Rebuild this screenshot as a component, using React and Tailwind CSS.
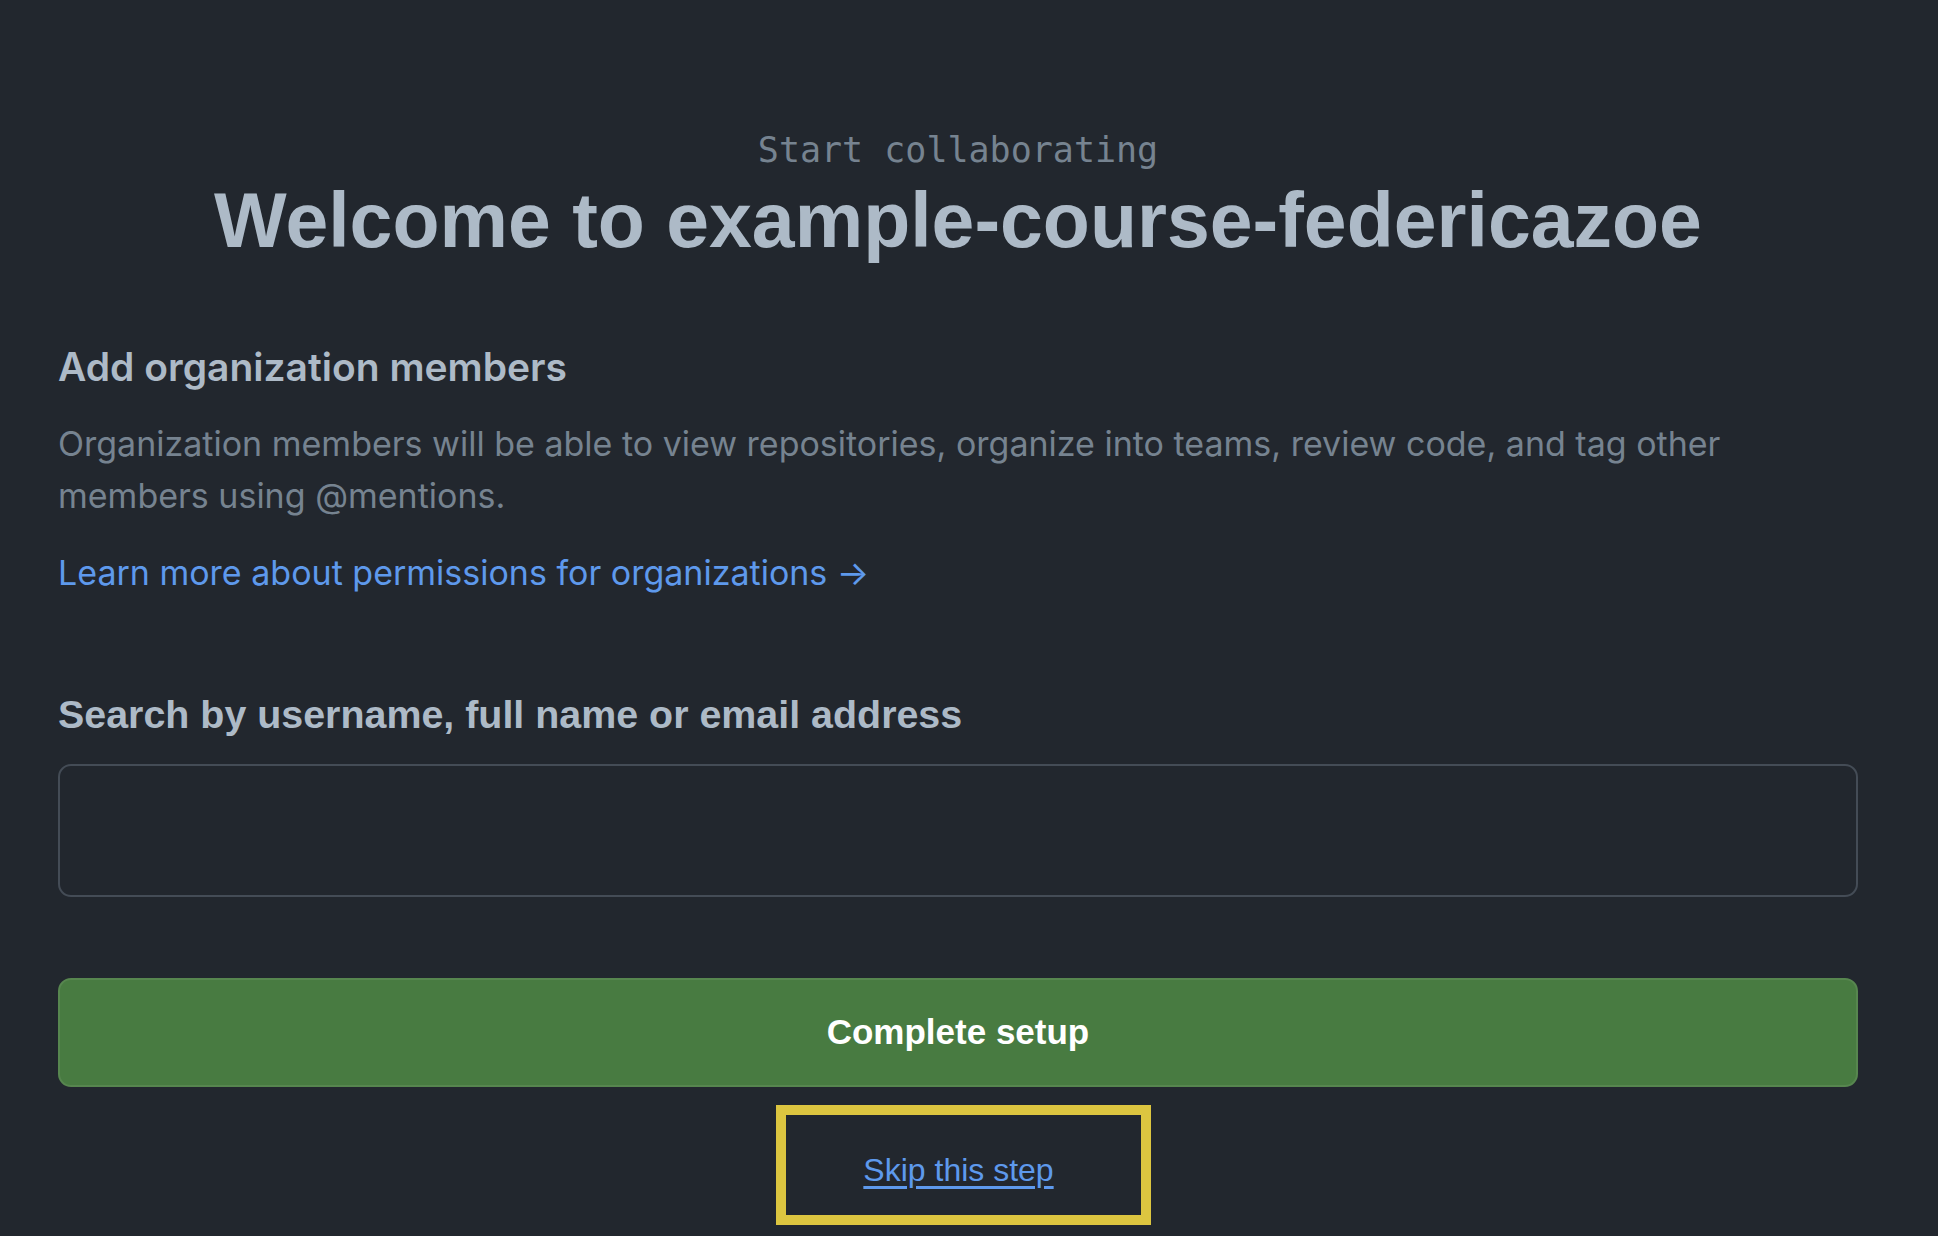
export default function App() {
  return (
    <div className="min-h-screen bg-[#22272e]">
      <div className="ml-[58px] w-[1800px] pt-[129px] pb-[11px]">
        <div className="text-center">
          <div className="font-['DejaVu_Sans_Mono',monospace] text-[35px] leading-[42px] text-[#768390]">
            Start collaborating
          </div>
          <h1 className="mt-[3px] font-['Liberation_Sans',Arial,sans-serif] text-[77px] font-bold leading-[92px] text-[#adbac7]">
            Welcome to example-course-federicazoe
          </h1>
        </div>

        <h2 className="mt-[77px] font-['Inter',sans-serif] text-[39px] font-semibold leading-[48px] text-[#adbac7]">
          Add organization members
        </h2>
        <p className="mt-[27px] font-['Inter',sans-serif] text-[34px] leading-[52px] text-[#768390]">
          Organization members will be able to view repositories, organize into teams, review code, and tag other
          members using @mentions.
        </p>
        <a
          href="#"
          className="mt-[25px] block font-['Inter',sans-serif] text-[34px] leading-[52px] text-[#5e99ec]"
        >
          Learn more about permissions for organizations →
        </a>

        <label
          htmlFor="search"
          className="mt-[91px] block font-['Liberation_Sans',Arial,sans-serif] text-[39.4px] font-bold leading-[48px] text-[#adbac7]"
        >
          Search by username, full name or email address
        </label>
        <input
          id="search"
          type="text"
          className="mt-[26px] block h-[133px] w-full rounded-[13px] border-2 border-[#444c56] bg-[#22272e] px-6 text-[32px] text-[#adbac7] outline-none"
        />

        <button
          type="button"
          className="mt-[81px] flex h-[109px] w-full items-center justify-center rounded-[13px] border-2 border-[#57864f] bg-[#487b41] font-['Liberation_Sans',Arial,sans-serif] text-[35px] font-bold text-white"
        >
          Complete setup
        </button>

        <div className="mt-[18px] ml-[718px] flex h-[120px] w-[375px] items-center justify-center border-[10px] border-[#dcc540] pt-[10px] pr-[10px]">
          <a
            href="#"
            className="font-['Liberation_Sans',Arial,sans-serif] text-[32px] text-[#5e99ec] underline underline-offset-[5px]"
          >
            Skip this step
          </a>
        </div>
      </div>
    </div>
  );
}
